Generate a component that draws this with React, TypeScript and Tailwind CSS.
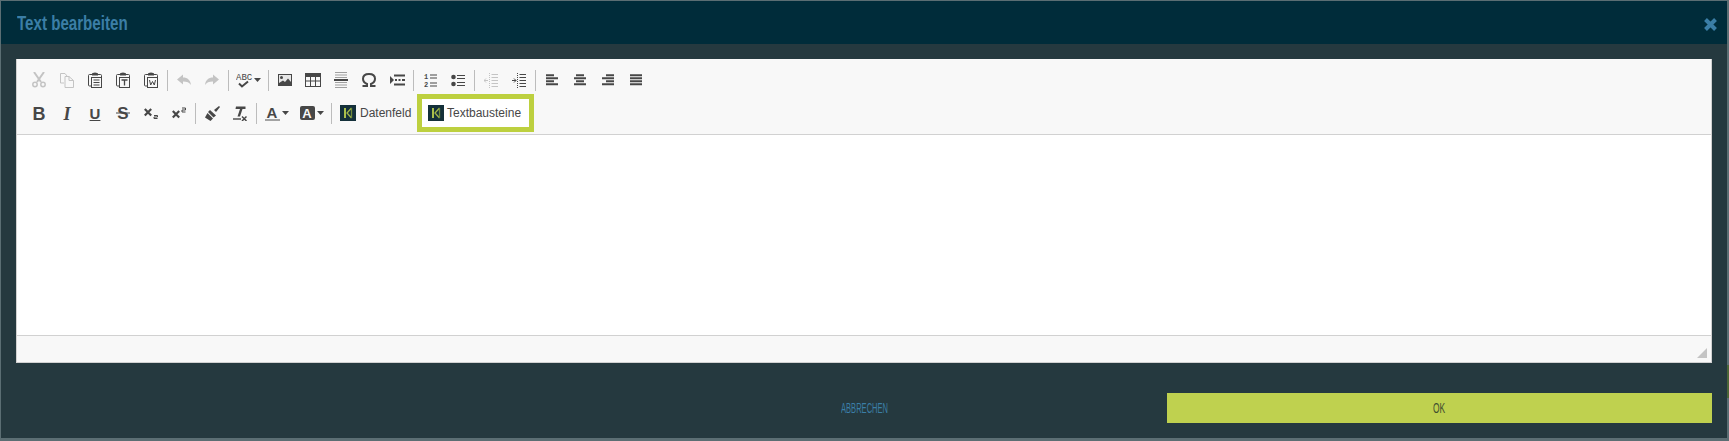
import React from "react";

const D = "#474747";
const L = "#c4c4c4";

function Svg({ w = 16, h = 16, children }: { w?: number; h?: number; children: React.ReactNode }) {
  return (
    <svg width={w} height={h} viewBox={`0 0 ${w} ${h}`} className="block shrink-0">
      {children}
    </svg>
  );
}

function Clip({ children }: { children?: React.ReactNode }) {
  return (
    <Svg w={14} h={16}>
      <path d="M4 2.5H1.5Q.5 2.5.5 3.5V13Q.5 14 1.5 14H3M10 2.5H12.5Q13.5 2.5 13.5 3.5V5" fill="none" stroke={D} />
      <path d="M4 2Q4 .5 7 .5T10 2V3.5H4Z" fill={D} />
      <rect x="3.5" y="5.5" width="10" height="10" fill="#f8f8f8" stroke={D} />
      {children}
    </Svg>
  );
}

const icons: Record<string, React.ReactNode> = {
  cut: (
    <Svg w={14} h={16}>
      <path d="M2 0L9 10M12 0L5 10" stroke={L} strokeWidth="2" fill="none" />
      <circle cx="3" cy="12.5" r="2.2" fill="none" stroke={L} strokeWidth="1.5" />
      <circle cx="11" cy="12.5" r="2.2" fill="none" stroke={L} strokeWidth="1.5" />
    </Svg>
  ),
  copy: (
    <Svg w={14} h={16}>
      <path d="M4 11H.5V1.5H5L7 4M5 4.5H9L13.5 8.5V15.5H5ZM9 4.5V8.5H13.5" fill="none" stroke={L} />
    </Svg>
  ),
  paste: (
    <Clip>
      <path d="M5.5 8h6M5.5 10.5h6M5.5 13h6" stroke={D} />
    </Clip>
  ),
  pasteT: (
    <Clip>
      <path d="M5.5 8h6M8.5 8v5.5" stroke={D} strokeWidth="1.3" />
    </Clip>
  ),
  pasteW: (
    <Clip>
      <path d="M5.5 8l1.2 5 1.8-3.5 1.8 3.5 1.2-5" stroke={D} fill="none" />
    </Clip>
  ),
  undo: (
    <Svg w={14} h={12}>
      <path d="M0 5.5L6 .5V3.5C10.5 3.5 13.5 6 14 11C12.5 8.5 10 7.5 6 7.5V10.5Z" fill={L} />
    </Svg>
  ),
  redo: (
    <Svg w={14} h={12}>
      <path d="M14 5.5L8 .5V3.5C3.5 3.5 .5 6 0 11C1.5 8.5 4 7.5 8 7.5V10.5Z" fill={L} />
    </Svg>
  ),
  image: (
    <Svg w={14} h={12}>
      <rect width="14" height="12" fill={D} />
      <path d="M1 1H13V8L10 4.5L7 8L5 6.5L1 9Z" fill="#f8f8f8" opacity=".9" />
      <circle cx="3.5" cy="3.5" r="1.5" fill={D} />
    </Svg>
  ),
  table: (
    <Svg w={16} h={14}>
      <rect width="16" height="14" fill={D} />
      <path d="M1 4H5V7.5H1ZM6 4H10V7.5H6ZM11 4H15V7.5H11ZM1 8.5H5V13H1ZM6 8.5H10V13H6ZM11 8.5H15V13H11Z" fill="#f8f8f8" />
    </Svg>
  ),
  hr: (
    <Svg w={14} h={16}>
      <path d="M1 .5H13M1 3H13M1 5.5H13M1 10.5H13M1 13H13M1 15.5H13" stroke="#a0a0a0" />
      <path d="M0 8H14" stroke={D} strokeWidth="2" />
    </Svg>
  ),
  omega: (
    <Svg w={14} h={14}>
      <path d="M.5 13H5V11C2.5 10 1 8 1 5.8C1 2.8 3.5 1 7 1S13 2.8 13 5.8C13 8 11.5 10 9 11V13H13.5" fill="none" stroke={D} strokeWidth="2" />
    </Svg>
  ),
  block: (
    <Svg w={15} h={12}>
      <path d="M0 2L4 6L0 10Z" fill={D} />
      <path d="M4 1.5H15M5 6H7M8.5 6H10.5M12 6H15M4 10.5H15" stroke={D} strokeWidth="2" />
    </Svg>
  ),
  ol: (
    <Svg w={13} h={15}>
      <text x="0" y="6" fontSize="7" fontFamily="Liberation Mono, monospace" fontWeight="700" fill={D}>1</text>
      <text x="0" y="14" fontSize="7" fontFamily="Liberation Mono, monospace" fontWeight="700" fill={D}>2</text>
      <path d="M6 2H13M6 5H13M6 10H13M6 13H13" stroke={D} />
    </Svg>
  ),
  ul: (
    <Svg w={14} h={13}>
      <circle cx="2.5" cy="3" r="2.3" fill={D} />
      <circle cx="2.5" cy="10" r="2.3" fill={D} />
      <path d="M6 1.5H14M6 4.5H14M6 8.5H14M6 11.5H14" stroke={D} />
    </Svg>
  ),
  outdent: (
    <Svg w={14} h={15}>
      <path d="M5.5 0V15" stroke={L} strokeDasharray="1 1" />
      <path d="M7.5 1.5H14M7.5 4.5H14M7.5 7.5H14M7.5 10.5H14M7.5 13.5H14M0 7.5H4M2 5.5L0 7.5L2 9.5" stroke={L} fill="none" />
    </Svg>
  ),
  indent: (
    <Svg w={14} h={15}>
      <path d="M5.5 0V15" stroke={D} strokeDasharray="1 1" />
      <path d="M7.5 1.5H14M7.5 4.5H14M7.5 7.5H14M7.5 10.5H14M7.5 13.5H14M0 7.5H4M2 5.5L4 7.5L2 9.5" stroke={D} fill="none" />
    </Svg>
  ),
  left: (
    <Svg w={12} h={12}>
      <path d="M0 1.25H8M0 4.25H12M0 7.25H8M0 10.25H12" stroke={D} strokeWidth="2" />
    </Svg>
  ),
  center: (
    <Svg w={12} h={12}>
      <path d="M2 1.25H10M0 4.25H12M2 7.25H10M0 10.25H12" stroke={D} strokeWidth="2" />
    </Svg>
  ),
  right: (
    <Svg w={12} h={12}>
      <path d="M4 1.25H12M0 4.25H12M4 7.25H12M0 10.25H12" stroke={D} strokeWidth="2" />
    </Svg>
  ),
  justify: (
    <Svg w={12} h={12}>
      <path d="M0 1.25H12M0 4.25H12M0 7.25H12M0 10.25H12" stroke={D} strokeWidth="2" />
    </Svg>
  ),
  sub: (
    <Svg w={14} h={12}>
      <path d="M.8 2L7.2 8.5M7.2 2L.8 8.5" stroke={D} strokeWidth="2.2" />
      <path d="M10 8.5H13.5V10H10V11.5H13.5" stroke={D} fill="none" />
    </Svg>
  ),
  sup: (
    <Svg w={14} h={12}>
      <path d="M.8 4L7.2 10.5M7.2 4L.8 10.5" stroke={D} strokeWidth="2.2" />
      <path d="M10 1H13.5V3H10V5H13.5" stroke={D} fill="none" />
    </Svg>
  ),
  brush: (
    <Svg w={15} h={15}>
      <path d="M9 4L14 0L15 1L11 6Z" fill={D} />
      <path d="M5 4L11 9.5L8.5 11.5L3 6Z" fill={D} />
      <path d="M2.5 7L8 12.5L5.5 15L0 11.5Z" fill={D} />
    </Svg>
  ),
  removeFormat: (
    <Svg w={14} h={15}>
      <path d="M3 .5H12.5V3H9.5L7 10.5H4.5L7 3H2.5Z" fill={D} />
      <path d="M0 13H8" stroke={D} strokeWidth="1.4" />
      <path d="M9 10.5L13.5 15M13.5 10.5L9 15" stroke={D} strokeWidth="1.5" />
    </Svg>
  ),
  strike: (
    <Svg w={14} h={22}>
      <text x="7" y="17" textAnchor="middle" fontSize="17" fontWeight="700" fontFamily="Liberation Sans, sans-serif" fill={D}>S</text>
      <path d="M0 11H14" stroke={D} />
    </Svg>
  ),
};

function Btn({ name }: { name: string }) {
  return <div className="w-[28px] h-[28px] flex items-center justify-center shrink-0">{icons[name]}</div>;
}

function Sep() {
  return <div className="w-px h-[21px] mx-[2px] bg-[#bcbcbc] shrink-0" />;
}

function Arrow() {
  return (
    <svg width="7" height="4" viewBox="0 0 7 4" className="block shrink-0">
      <path d="M0 0H7L3.5 4Z" fill={D} />
    </svg>
  );
}

function Logo() {
  return (
    <svg width="16" height="16" viewBox="0 0 16 16" className="block shrink-0">
      <rect width="16" height="16" fill="#14303a" />
      <path d="M5 3V13" fill="none" stroke="#a9bf4b" strokeWidth="2" />
      <path d="M11.5 3L7 8L11.5 13" fill="none" stroke="#a3b84a" strokeWidth="1.3" />
      <path d="M11.5 3V13" fill="none" stroke="#6f8a3c" strokeWidth="1.3" />
    </svg>
  );
}

const sans = "[font-family:'Liberation_Sans',Arial,sans-serif]";

export default function App() {
  return (
    <div className="relative w-[1729px] h-[441px] bg-[#5b6e73] overflow-hidden pl-px pt-px pr-[2px] pb-[3px]">
      <div className="absolute right-0 top-[365px] w-[2px] h-[33px] bg-[#4c6638]" />
      <div className="h-full flex flex-col bg-[#25393f]">
        <header className="h-[43px] shrink-0 bg-[#002c3a] flex items-center justify-between pl-[16px] pr-[9px]">
          <h1 className={`${sans} font-bold text-[21px] leading-none text-[#3b7ea6] origin-left scale-x-[.72]`}>Text bearbeiten</h1>
          <svg width="15" height="15" viewBox="0 0 15 15" className="block mt-[4px]">
            <path d="M2.5 2.5L12.5 12.5M12.5 2.5L2.5 12.5" stroke="#3b7ea6" strokeWidth="4" />
          </svg>
        </header>

        <div className="flex-1 flex flex-col px-[15px] pt-[15px]">
          <div className="h-[304px] flex flex-col bg-white border-x border-[#d1d1d1]">
            <div className="h-[76px] shrink-0 bg-[#f8f8f8] border-b border-[#d1d1d1] pl-[8px] pt-[7px] flex flex-col gap-[5px]">
              <div className="flex items-center h-[28px]">
                <Btn name="cut" />
                <Btn name="copy" />
                <Btn name="paste" />
                <Btn name="pasteT" />
                <Btn name="pasteW" />
                <Sep />
                <Btn name="undo" />
                <Btn name="redo" />
                <Sep />
                <div className="w-[35px] h-[28px] flex items-center justify-center gap-[1px] shrink-0">
                  <svg width="17" height="16" viewBox="0 0 17 16" className="block shrink-0">
                    <text x="0" y="8" fontSize="9" fontFamily="Liberation Mono, monospace" fill={D}>ABC</text>
                    <path d="M3 11.5L6 14.5L12 9.5" fill="none" stroke={D} strokeWidth="2" />
                  </svg>
                  <Arrow />
                </div>
                <Sep />
                <Btn name="image" />
                <Btn name="table" />
                <Btn name="hr" />
                <Btn name="omega" />
                <Btn name="block" />
                <Sep />
                <Btn name="ol" />
                <Btn name="ul" />
                <Sep />
                <Btn name="outdent" />
                <Btn name="indent" />
                <Sep />
                <Btn name="left" />
                <Btn name="center" />
                <Btn name="right" />
                <Btn name="justify" />
              </div>
              <div className="flex items-center h-[28px]">
                <div className={`${sans} w-[28px] h-[28px] pt-[2px] flex items-center justify-center font-bold text-[18px] text-[#474747] shrink-0`}>B</div>
                <div className="w-[28px] h-[28px] pt-[2px] flex items-center justify-center font-bold italic text-[18px] text-[#474747] shrink-0 [font-family:'Liberation_Serif',serif]">I</div>
                <div className={`${sans} w-[28px] h-[28px] pt-[2px] flex items-center justify-center font-bold underline text-[15px] text-[#474747] shrink-0`}>U</div>
                <Btn name="strike" />
                <Btn name="sub" />
                <Btn name="sup" />
                <Sep />
                <Btn name="brush" />
                <Btn name="removeFormat" />
                <Sep />
                <div className="w-[35px] h-[28px] flex items-center justify-center gap-[2px] shrink-0">
                  <div className="w-[15px] flex flex-col items-center">
                    <span className={`${sans} font-bold text-[15px] leading-[13px] text-[#474747]`}>A</span>
                    <span className="w-[15px] h-[2px] bg-[#a3a3a3]" />
                  </div>
                  <Arrow />
                </div>
                <div className="w-[35px] h-[28px] flex items-center justify-center gap-[2px] shrink-0">
                  <div className="w-[15px] h-[14px] rounded-[2px] bg-[#474747] flex items-center justify-center">
                    <span className={`${sans} font-bold text-[13px] leading-none text-[#f8f8f8]`}>A</span>
                  </div>
                  <Arrow />
                </div>
                <Sep />
                <div className="h-[28px] w-[83px] pl-[6px] flex items-center gap-[4px] shrink-0">
                  <Logo />
                  <span className={`${sans} text-[12px] text-[#474747]`}>Datenfeld</span>
                </div>
                <div className="h-[38px] w-[117px] -my-[5px] border-[5px] border-[#bdd03f] bg-white flex items-center pl-[6px] gap-[3px] shrink-0">
                  <Logo />
                  <span className={`${sans} text-[12px] text-[#474747]`}>Textbausteine</span>
                </div>
              </div>
            </div>
            <div className="flex-1 bg-white" />
            <div className="h-[28px] shrink-0 bg-[#f8f8f8] border-t border-b border-[#d1d1d1] flex items-end justify-end pr-[4px] pb-[4px]">
              <svg width="10" height="10" viewBox="0 0 10 10" className="block">
                <path d="M10 0V10H0Z" fill="#c4c4c4" />
              </svg>
            </div>
          </div>

          <div className="mt-[30px] h-[30px] flex">
            <div className={`${sans} w-[1151px] pl-[825px] flex items-center text-[14px] text-[#3b7ea6]`}>
              <span className="block origin-left scale-x-[.54]">ABBRECHEN</span>
            </div>
            <div className={`${sans} flex-1 bg-[#bfd14f] flex items-center justify-center text-[14px] text-[#3f4f2f]`}>
              <span className="block scale-x-[.6]">OK</span>
            </div>
          </div>
        </div>
      </div>
    </div>
  );
}
